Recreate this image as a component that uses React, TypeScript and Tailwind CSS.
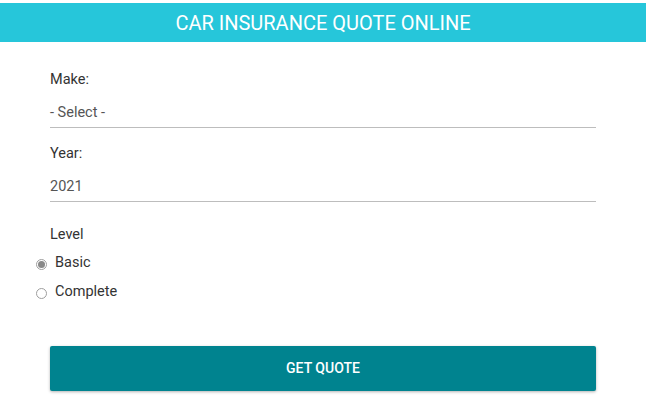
export default function App() {
  return (
    <div className="w-[646px] h-[408px] bg-white pt-[3px] font-['Roboto',sans-serif] overflow-hidden">
      <div className="h-[39px] bg-[#26c6da] flex items-center justify-center">
        <h1 className="text-white text-[20px] leading-none">CAR INSURANCE QUOTE ONLINE</h1>
      </div>

      <form className="px-[50px] pt-[31px]">
        <label className="block text-[14.5px] text-[#333] leading-none">Make:</label>
        <div className="mt-[18px] pb-[7px] border-b border-[#bdbdbd] text-[14.5px] text-[#555] leading-none">- Select -</div>

        <label className="block mt-[19px] text-[14.5px] text-[#333] leading-none">Year:</label>
        <div className="mt-[18px] pb-[7px] border-b border-[#bdbdbd] text-[14.5px] text-[#555] leading-none">2021</div>

        <div className="mt-[26px] text-[14.5px] text-[#333] leading-none">Level</div>
        <div className="-ml-[14px] mt-[13px] flex flex-col gap-[15px]">
          <label className="flex items-center gap-[8px] text-[14.5px] text-[#333] leading-none">
            <span className="w-[11px] h-[11px] mt-[3px] rounded-full border border-[#9e9e9e] flex items-center justify-center">
              <span className="w-[7px] h-[7px] rounded-full bg-[#888]"></span>
            </span>
            Basic
          </label>
          <label className="flex items-center gap-[8px] text-[14.5px] text-[#333] leading-none">
            <span className="w-[11px] h-[11px] mt-[3px] rounded-full border border-[#9e9e9e]"></span>
            Complete
          </label>
        </div>

        <button
          type="button"
          className="mt-[46px] w-full h-[45px] bg-[#00838f] rounded-[2px] shadow-[0_1px_3px_rgba(0,0,0,0.3)] text-white text-[14px] font-medium"
        >
          GET QUOTE
        </button>
      </form>
    </div>
  )
}
